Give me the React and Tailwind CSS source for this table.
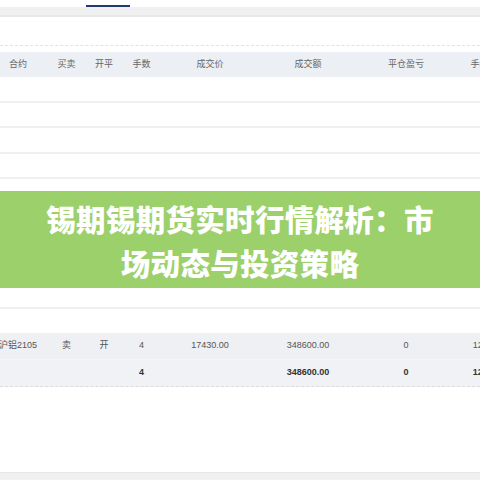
const cols = [
  { key: 'contract', label: '合约', w: 'w-[60px]' },
  { key: 'side', label: '买卖', w: 'w-[37px]' },
  { key: 'offset', label: '开平', w: 'w-[38px]' },
  { key: 'qty', label: '手数', w: 'w-[37px]' },
  { key: 'price', label: '成交价', w: 'w-[100px]' },
  { key: 'amount', label: '成交额', w: 'w-[96px]' },
  { key: 'pnl', label: '平仓盈亏', w: 'w-[100px]' },
  { key: 'fee', label: '手续费', w: 'w-[56px]' },
]

const trade = {
  contract: '沪铝2105',
  side: '卖',
  offset: '开',
  qty: '4',
  price: '17430.00',
  amount: '348600.00',
  pnl: '0',
  fee: '12.00',
}

const total = { qty: '4', amount: '348600.00', pnl: '0', fee: '12.00' }

function Row({ data, className = '', textClass = 'text-[#555]' }) {
  return (
    <div className={`flex h-[26px] items-center -ml-[12px] ${className}`}>
      {cols.map((c) => (
        <div key={c.key} className={`${c.w} shrink-0 text-center whitespace-nowrap ${textClass}`}>
          {data ? data[c.key] : ''}
        </div>
      ))}
    </div>
  )
}

function EmptyRow() {
  return <div className="h-[25.5px] border-b-2 border-[#f0f0f0]" />
}

export default function App() {
  return (
    <div
      className="w-[480px] h-[480px] overflow-hidden bg-white flex flex-col text-[9px]"
      style={{ fontFamily: '"Liberation Sans", "Noto Sans CJK SC", sans-serif' }}
    >
      {/* tab strip */}
      <div className="h-[7px] shrink-0 flex items-end">
        <div className="ml-[86px] w-[44px] h-[2px] bg-[#1f3a6e]" />
      </div>
      <div className="h-[10px] shrink-0 bg-[#f0f0f0] border-b-2 border-[#e8e8e8]" />
      <div className="h-[29px] shrink-0 border-b border-dashed border-[#e2e2e2]" />
      <div className="h-[6px] shrink-0" />

      {/* table header */}
      <div className="shrink-0 bg-[#eceff4] overflow-hidden">
        <div className="flex h-[25px] items-center -ml-[12px]">
          {cols.map((c) => (
            <div key={c.key} className={`${c.w} shrink-0 text-center whitespace-nowrap text-[#666]`}>
              {c.label}
            </div>
          ))}
        </div>
      </div>

      <EmptyRow />
      <EmptyRow />
      <EmptyRow />
      <EmptyRow />
      <div className="h-[12px] shrink-0" />

      {/* title banner */}
      <div className="h-[97px] shrink-0 bg-[#9bd06a] flex items-center justify-center">
        <h1
          className="text-white text-[29.5px] font-black leading-[44px] text-center tracking-[0.3px]"
          style={{ fontFamily: '"Noto Sans CJK SC", sans-serif' }}
        >
          锡期锡期货实时行情解析：市
          <br />
          场动态与投资策略
        </h1>
      </div>

      <div className="h-[21px] shrink-0 border-b-2 border-[#f0f0f0]" />
      <div className="h-[24px] shrink-0" />

      <div className="shrink-0 overflow-hidden bg-[#eef0f4] border-b border-[#f6f6f6]">
        <Row data={trade} />
      </div>
      <div className="shrink-0 overflow-hidden bg-[#f0f2f5] border-b border-dashed border-[#dcdcdc]">
        <Row data={total} textClass="text-[#333] font-bold" />
      </div>

      <div className="flex-1" />
      <div className="h-[8px] shrink-0 bg-[#f0f0f0] border-t border-[#e6e6e6]" />
    </div>
  )
}
